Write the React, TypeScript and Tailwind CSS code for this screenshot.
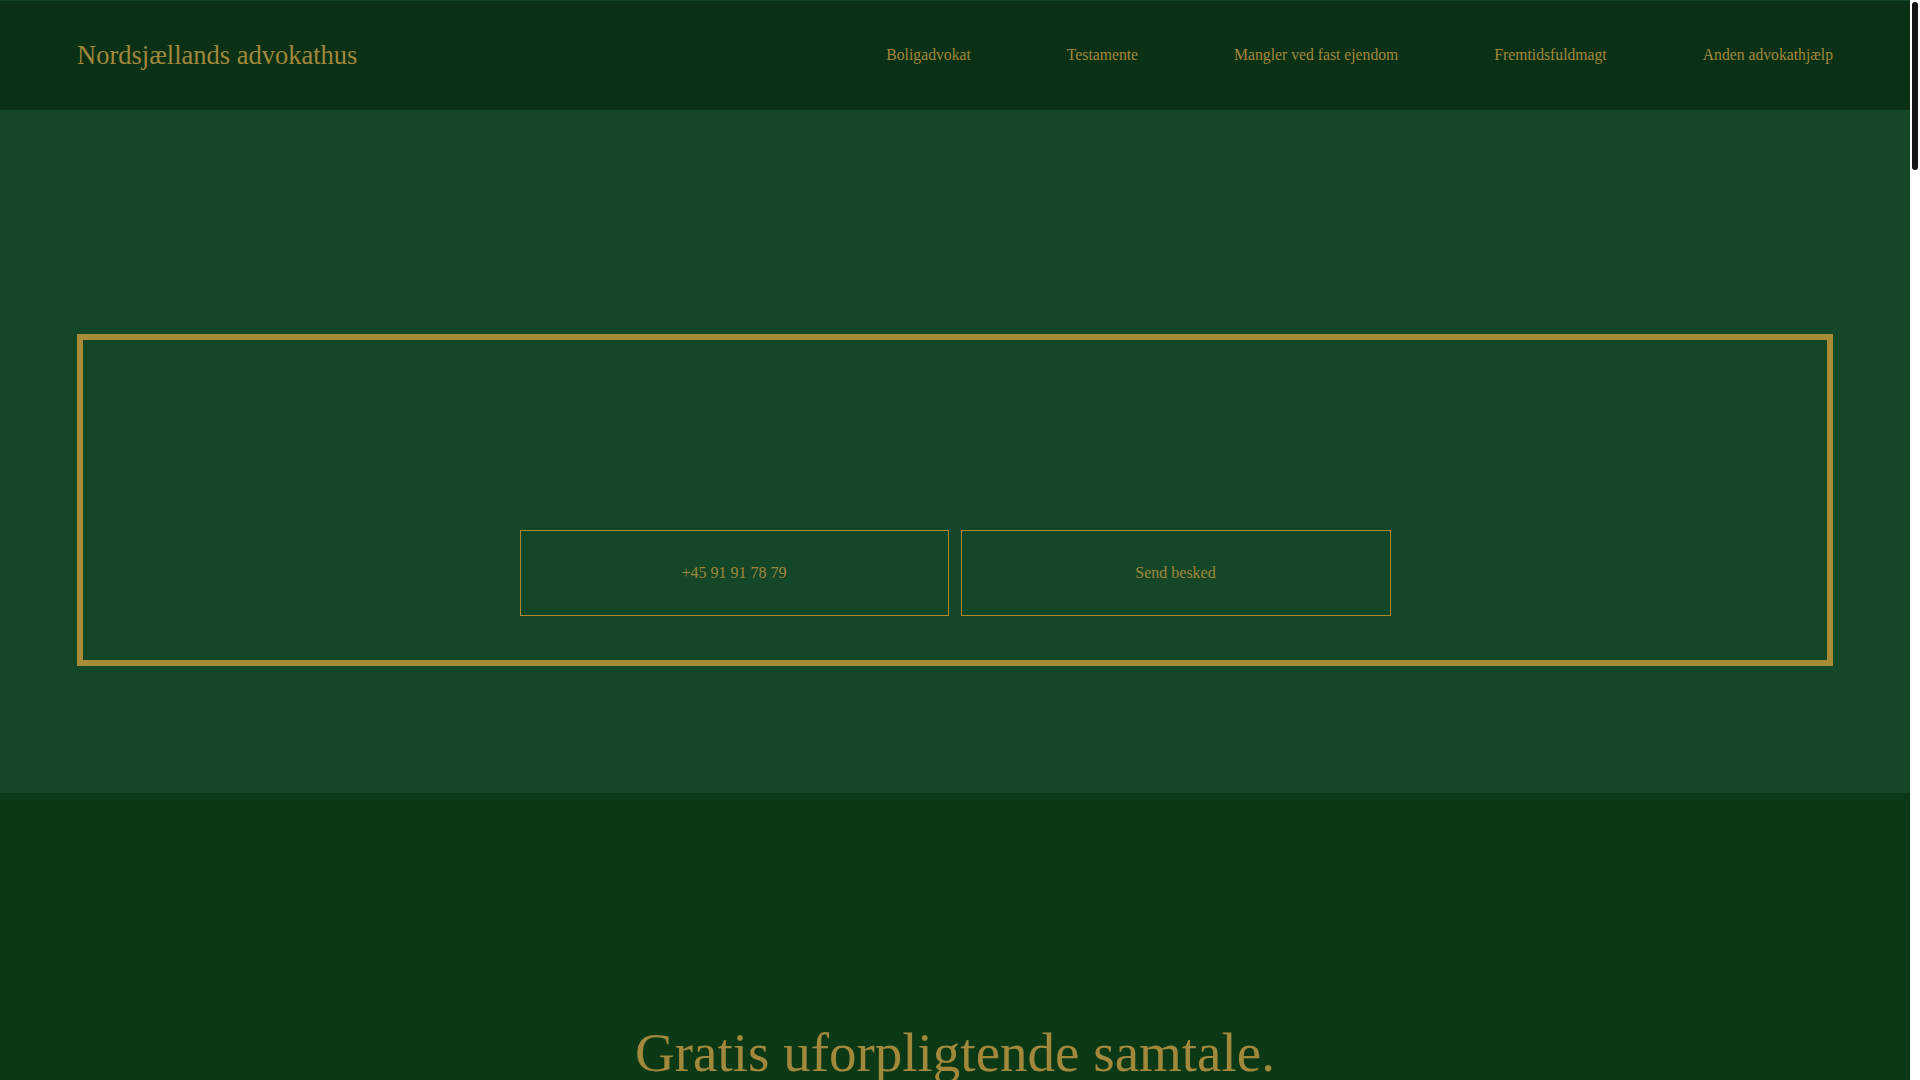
import React from "react";

const serif = "font-['Liberation_Serif','Times_New_Roman',serif]";

export default function App() {
  const nav = [
    "Boligadvokat",
    "Testamente",
    "Mangler ved fast ejendom",
    "Fremtidsfuldmagt",
    "Anden advokathjælp",
  ];
  return (
    <div className={`${serif} bg-white pr-[10px]`}>
      <div aria-hidden className="fixed top-0 right-0 w-[10px] h-screen bg-white z-10">
        <div className="absolute top-[2px] right-[2px] w-[6px] h-[168px] rounded-full bg-[#151515]" />
      </div>

      <header className="h-[110px] border-t border-[#14472a] bg-[#0a3116] flex items-center justify-between px-[77px]">
        <div className="text-[26.5px] text-[#a1883a] leading-none">Nordsjællands advokathus</div>
        <nav className="flex items-center gap-[96px] mb-[2px]">
          {nav.map((n) => (
            <a key={n} className="text-[15.7px] text-[#a1883a] leading-none">
              {n}
            </a>
          ))}
        </nav>
      </header>

      <section className="h-[683px] bg-[#144628] pt-[224px] px-[77px]">
        <div className="h-[332px] border-[6px] border-[#a98c36] pt-[190px] flex justify-center">
          <div className="flex gap-[12px] h-[86px]">
            <a className="w-[429px] h-[86px] border border-[#b3862c] flex items-center justify-center text-[16px] text-[#a1883a]">
              +45 91 91 78 79
            </a>
            <a className="w-[430px] h-[86px] border border-[#b3862c] flex items-center justify-center text-[16px] text-[#a1883a]">
              Send besked
            </a>
          </div>
        </div>
      </section>

      <section className="bg-[#0b3815] pt-[232px] pb-[200px] px-[77px]">
        <h2 className="text-center text-[55px] leading-none text-[#a1883a]">
          Gratis uforpligtende samtale.
        </h2>
        <p className="mt-[48px] text-center text-[18px] text-[#a1883a] max-w-[800px] mx-auto leading-relaxed">
          Kontakt os i dag for en uforpligtende snak om din sag. Vi sidder klar til at hjælpe dig med rådgivning inden for bolig, arv, testamente og fast ejendom.
        </p>
      </section>

      <section className="bg-[#144628] py-[200px] px-[77px] h-[1600px]">
        <h2 className="text-center text-[44px] leading-none text-[#a1883a]">Vores ydelser</h2>
        <div className="mt-[80px] grid grid-cols-3 gap-[40px]">
          {nav.slice(0, 3).map((n) => (
            <div key={n} className="border border-[#b3862c] h-[400px] p-[40px] text-[#a1883a] text-[24px]">
              {n}
            </div>
          ))}
        </div>
      </section>

      <section className="bg-[#0b3815] py-[200px] px-[77px] h-[1800px]">
        <h2 className="text-center text-[44px] leading-none text-[#a1883a]">Om os</h2>
      </section>

      <section className="bg-[#144628] py-[200px] px-[77px] h-[1200px]">
        <h2 className="text-center text-[44px] leading-none text-[#a1883a]">Kontakt</h2>
      </section>

      <footer className="bg-[#0a3116] h-[400px] px-[77px] py-[80px] text-[#a1883a] text-[16px]">
        Nordsjællands advokathus
      </footer>
    </div>
  );
}
